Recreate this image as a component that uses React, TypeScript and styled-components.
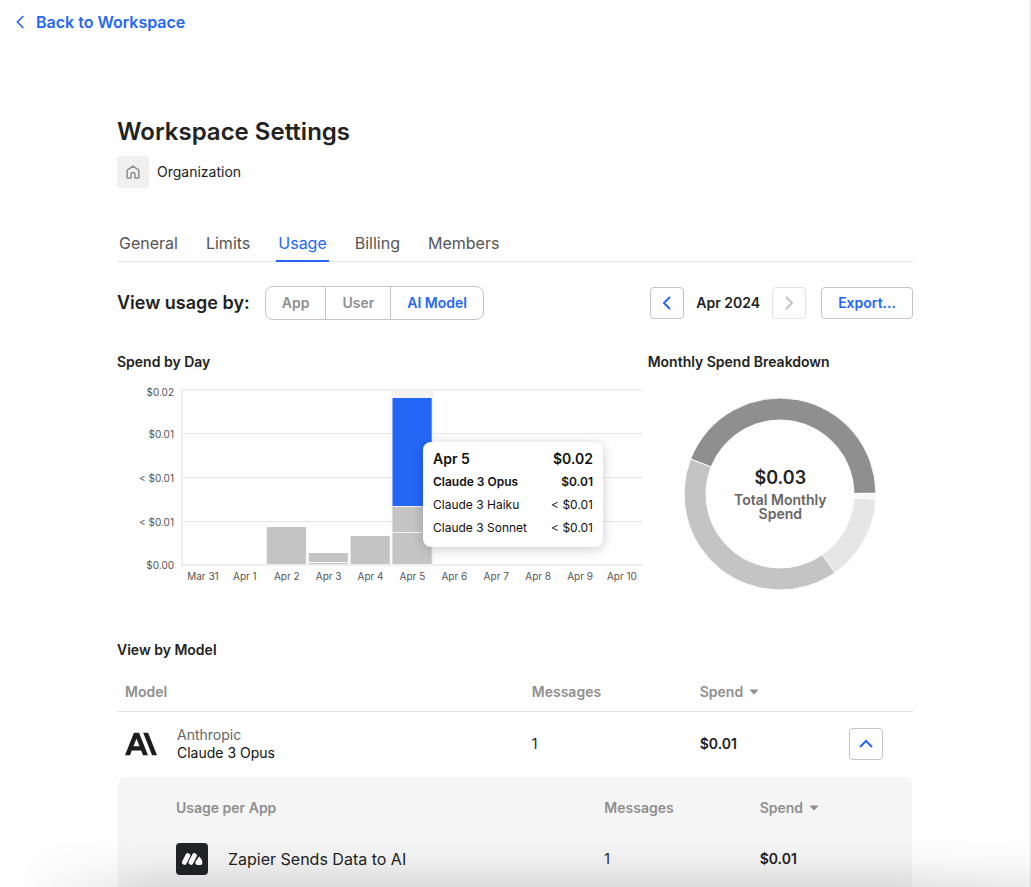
import React, { useState } from 'react';
import styled, { createGlobalStyle } from 'styled-components';

const GlobalStyle = createGlobalStyle`
  *, *::before, *::after { box-sizing: border-box; }
  body {
    margin: 0;
    background: #fefefe;
    color: #222;
    font-family: Inter, "Liberation Sans", sans-serif;
    font-size: 14px;
    line-height: 20px;
  }
  button { font: inherit; cursor: pointer; }
  h1, h2, p { margin: 0; }
`;

const Page = styled.div`
  min-height: 100vh;
  border-right: 1px solid #e2e2e2;
`;

const BottomShade = styled.div`
  position: fixed;
  inset: auto 0 0 0;
  height: 48px;
  pointer-events: none;
  background: linear-gradient(to bottom, rgba(0, 0, 0, 0), rgba(0, 0, 0, 0.03) 50%, rgba(0, 0, 0, 0.1));
  mask-image: linear-gradient(to right, transparent 2%, #000 16%, #000 86%, rgba(0, 0, 0, 0.7));
`;

const TopBar = styled.header`
  display: flex;
  align-items: center;
  height: 44px;
  padding: 0 16px;
`;

const BackLink = styled.a`
  display: flex;
  align-items: center;
  gap: 12px;
  color: #2467f6;
  font-size: 16px;
  font-weight: 600;
  text-decoration: none;
`;

const Content = styled.main`
  max-width: 796px;
  margin: 0 auto;
  padding-top: 72px;
`;

const Title = styled.h1`
  font-size: 24px;
  line-height: 32px;
  font-weight: 600;
`;

const Organization = styled.div`
  display: flex;
  align-items: center;
  gap: 8px;
  margin-top: 8px;
`;

const OrgIcon = styled.span`
  display: grid;
  place-items: center;
  width: 32px;
  height: 32px;
  border-radius: 4px;
  background: #f0f0f0;
`;

const Tabs = styled.nav`
  display: flex;
  gap: 24px;
  margin-top: 38px;
  border-bottom: 1px solid #e5e5e5;
`;

const Tab = styled.a<{ $active?: boolean }>`
  margin-bottom: -1px;
  padding: 7px 2px;
  border-bottom: 2px solid ${(p) => (p.$active ? '#2467f6' : 'transparent')};
  color: ${(p) => (p.$active ? '#2467f6' : '#555')};
  font-size: 16px;
  text-decoration: none;
`;

const Toolbar = styled.div`
  display: flex;
  align-items: center;
  justify-content: space-between;
  margin-top: 24px;
`;

const ToolGroup = styled.div<{ $gap: number }>`
  display: flex;
  align-items: center;
  gap: ${(p) => p.$gap}px;
`;

const ToolLabel = styled.h2`
  font-size: 18px;
  line-height: 24px;
  font-weight: 600;
`;

const Segments = styled.div`
  display: flex;
  height: 34px;
  border: 1px solid #c4c4c4;
  border-radius: 8px;
`;

const Segment = styled.button<{ $active: boolean }>`
  padding: 0 16px;
  border: 0;
  background: none;
  color: ${(p) => (p.$active ? '#2467f6' : '#8f8f8f')};
  font-weight: 600;
  & + & { border-left: 1px solid #c4c4c4; }
`;

const OutlineButton = styled.button<{ $wide?: boolean }>`
  display: grid;
  place-items: center;
  width: ${(p) => (p.$wide ? 'auto' : '34px')};
  height: 32px;
  padding: ${(p) => (p.$wide ? '0 16px' : '0')};
  border: 1px solid #c4c4c4;
  border-radius: 4px;
  background: #fefefe;
  color: #2467f6;
  font-weight: 600;
  &:disabled { border-color: #e2e2e2; color: #c4c4c4; cursor: default; }
`;

const Strong = styled.span`
  font-weight: 600;
`;

const Charts = styled.div`
  display: grid;
  grid-template-columns: 2fr 1fr;
  margin-top: 32px;
`;

const SectionTitle = styled.h2`
  font-size: 14px;
  line-height: 20px;
  font-weight: 600;
`;

const ChartBox = styled.div`
  position: relative;
  height: 208px;
  margin-top: 8px;
`;

const AxisText = styled.text`
  fill: #555;
  font-size: 10px;
`;

const Tooltip = styled.dl`
  position: absolute;
  left: 306px;
  top: 62px;
  display: grid;
  grid-template-columns: 1fr auto;
  width: 180px;
  margin: 0;
  padding: 5px 10px 8px;
  border-radius: 8px;
  background: #fff;
  color: #111;
  font-size: 12px;
  line-height: 23px;
  box-shadow: 0 2px 12px rgba(0, 0, 0, 0.2);
`;

const TipName = styled.dt<{ $strong?: boolean; $large?: boolean }>`
  font-weight: ${(p) => (p.$strong ? 600 : 400)};
  font-size: ${(p) => (p.$large ? 14 : 12)}px;
`;

const TipValue = styled(TipName).attrs({ as: 'dd' })`
  margin: 0;
  text-align: right;
`;

const DonutBox = styled.div`
  display: grid;
  place-items: center;
  margin-top: 26px;
  & > * { grid-area: 1 / 1; }
`;

const DonutLabel = styled.div`
  display: flex;
  flex-direction: column;
  width: 110px;
  padding-bottom: 4px;
  text-align: center;
  color: #666;
  font-weight: 600;
  line-height: 14px;
`;

const DonutTotal = styled.strong`
  color: #222;
  font-size: 18px;
  line-height: 30px;
  font-weight: 600;
`;

const ModelSection = styled.section`
  margin-top: 50px;
`;

const Table = styled.table`
  width: 100%;
  border-collapse: collapse;
  table-layout: fixed;
`;

const ModelTable = styled(Table)`
  margin-top: 12px;
`;

const Th = styled.th<{ $width: string; $ruled?: boolean }>`
  width: ${(p) => p.$width};
  height: ${(p) => (p.$ruled ? 39 : 30)}px;
  padding: ${(p) => (p.$ruled ? '2px 8px 0' : '0')};
  border-bottom: ${(p) => (p.$ruled ? '1px solid #e5e5e5' : '0')};
  color: #8f8f8f;
  font-weight: 600;
  text-align: left;
`;

const SortButton = styled.button`
  display: flex;
  align-items: center;
  gap: 6px;
  padding: 0;
  border: 0;
  background: none;
  color: inherit;
`;

const Td = styled.td<{ $strong?: boolean }>`
  height: 66px;
  padding: 0 8px 1px;
  font-weight: ${(p) => (p.$strong ? 600 : 400)};
`;

const ModelCell = styled.div`
  display: flex;
  align-items: center;
  gap: 20px;
  line-height: 18px;
  color: #111;
`;

const Vendor = styled.div`
  color: #666;
`;

const DetailTd = styled.td`
  padding: 0 1px;
`;

const DetailPanel = styled.div`
  padding: 16px 0 0 58px;
  border-radius: 8px 8px 0 0;
  background: #f5f5f5;
`;

const AppTd = styled.td<{ $strong?: boolean }>`
  height: 64px;
  padding: 8px 0 0;
  vertical-align: middle;
  font-weight: ${(p) => (p.$strong ? 600 : 400)};
`;

const AppCell = styled.div`
  display: flex;
  align-items: center;
  gap: 20px;
  font-size: 16px;
`;

const CHEVRONS = {
  left: 'M11 2L5 8L11 14',
  right: 'M5 2L11 8L5 14',
  up: 'M2 11L8 5L14 11',
};

const Chevron = ({ to }: { to: keyof typeof CHEVRONS }) => (
  <svg width="16" height="16" viewBox="0 0 16 16" fill="none" stroke="currentColor" strokeWidth="2" aria-hidden="true">
    <path d={CHEVRONS[to]} />
  </svg>
);

const Caret = () => (
  <svg width="10" height="6" viewBox="0 0 10 6" fill="currentColor" aria-hidden="true">
    <path d="M1.4.5h7.2q.9 0 .3.7L5.6 5q-.6.6-1.2 0L1.1 1.2Q.5.5 1.4.5z" />
  </svg>
);

const tickLabels = ['$0.02', '$0.01', '< $0.01', '< $0.01', '$0.00'];
const tickLines = [10, 54, 98, 142, 185];
const days = ['Mar 31', 'Apr 1', 'Apr 2', 'Apr 3', 'Apr 4', 'Apr 5', 'Apr 6', 'Apr 7', 'Apr 8', 'Apr 9', 'Apr 10'];
const bars = [
  { day: 2, top: 147, height: 37, fill: '#c4c4c4' },
  { day: 3, top: 173, height: 9, fill: '#c4c4c4' },
  { day: 3, top: 183, height: 1, fill: '#c4c4c4' },
  { day: 4, top: 156, height: 28, fill: '#c4c4c4' },
  { day: 5, top: 18, height: 108, fill: '#2467f6' },
  { day: 5, top: 127, height: 25, fill: '#c4c4c4' },
  { day: 5, top: 153, height: 31, fill: '#c4c4c4' },
];
const AXIS = 65;
const BAND = 41.9;

const SpendChart = () => (
  <svg width="526" height="208" viewBox="0 0 526 208" role="img" aria-label="Spend by day">
    {tickLines.map((y, i) => (
      <g key={y}>
        <line x1={AXIS} x2="526" y1={i % 4 ? y - 0.5 : y} y2={i % 4 ? y - 0.5 : y} stroke={i % 4 ? '#e5e5e5' : '#eee'} strokeWidth={i % 4 ? 1 : 2} />
        <AxisText x="57" y={(i ? y : 12) + 4} textAnchor="end">{tickLabels[i]}</AxisText>
      </g>
    ))}
    <line x1={AXIS} x2={AXIS} y1="9" y2="186" stroke="#eee" strokeWidth="2" />
    <rect x={AXIS + BAND * 5} y="11" width={BAND} height="174" fill="#f3f3f3" />
    {bars.map((b) => (
      <rect key={`${b.day}-${b.top}`} x={AXIS + BAND * b.day + 1} y={b.top} width="39.2" height={b.height} fill={b.fill} />
    ))}
    {days.map((d, i) => (
      <AxisText key={d} x={AXIS + BAND * (i + 0.5)} y="200" textAnchor="middle">{d}</AxisText>
    ))}
  </svg>
);

const tooltipRows = [
  { name: 'Apr 5', value: '$0.02', strong: true, large: true },
  { name: 'Claude 3 Opus', value: '$0.01', strong: true },
  { name: 'Claude 3 Haiku', value: '< $0.01' },
  { name: 'Claude 3 Sonnet', value: '< $0.01' },
];

const slices = [
  { from: -158.6, to: -0.4, color: '#8f8f8f' },
  { from: 55, to: 201.4, color: '#c4c4c4' },
  { from: 3, to: 55, color: '#e6e6e6' },
  { from: -0.4, to: 3, color: '#f5f5f5' },
];

const point = (deg: number, r: number) => {
  const a = (deg * Math.PI) / 180;
  return `${(96 + r * Math.cos(a)).toFixed(2)} ${(96 + r * Math.sin(a)).toFixed(2)}`;
};

const Donut = () => (
  <svg width="192" height="192" viewBox="0 0 192 192" aria-hidden="true">
    {slices.map((s) => (
      <path
        key={s.color}
        d={`M${point(s.from, 96)}A96 96 0 0 1 ${point(s.to, 96)}L${point(s.to, 74)}A74 74 0 0 0 ${point(s.from, 74)}Z`}
        fill={s.color}
        stroke="#fefefe"
        strokeWidth="1"
      />
    ))}
  </svg>
);

const AnthropicLogo = () => (
  <svg width="32" height="24" viewBox="0 3.5 24 17" fill="#1d1d1d" role="img" aria-label="Anthropic logo">
    <path d="M17.304 3.541h-3.672l6.696 16.918H24Zm-10.608 0L0 20.459h3.744l1.37-3.553h7.005l1.369 3.553h3.744L10.536 3.541Zm-.371 10.223 2.291-5.946 2.292 5.946Z" />
  </svg>
);

const AppLogo = () => (
  <svg width="32" height="32" viewBox="0 0 32 32" aria-hidden="true">
    <rect width="32" height="32" rx="4" fill="#222326" />
    <g stroke="#fff" strokeWidth="4.8" strokeLinecap="round">
      <path d="M8.4 19.4L11.8 12.6M15 19.4L18.4 12.6" />
    </g>
    <path d="M23.2 13.2q3.2 3.5 3.2 6.2a2.4 2.4 0 0 1-2.5 2.5h-2.4a2.3 2.3 0 0 1-1.9-3.5z" fill="#fff" />
  </svg>
);

const views = ['App', 'User', 'AI Model'];

export default function App() {
  const [view, setView] = useState('AI Model');
  return (
    <Page>
      <GlobalStyle />
      <TopBar>
        <BackLink href="#workspace">
          <svg width="8" height="14" viewBox="0 0 8 14" fill="none" stroke="currentColor" strokeWidth="1.6" aria-hidden="true">
            <path d="M7.4 1L1.4 7l6 6" />
          </svg>
          Back to Workspace
        </BackLink>
      </TopBar>
      <Content>
        <Title>Workspace Settings</Title>
        <Organization>
          <OrgIcon>
            <svg width="14" height="14" viewBox="0 0 14 14" fill="none" stroke="#8f8f8f" strokeWidth="1.5" strokeLinejoin="round" aria-hidden="true">
              <path d="M1.2 13V5.2L7 1.2l5.8 4V13H9V9.4q0-1.8-2-1.8t-2 1.8V13z" />
            </svg>
          </OrgIcon>
          Organization
        </Organization>
        <Tabs aria-label="Settings">
          {['General', 'Limits', 'Usage', 'Billing', 'Members'].map((t) => (
            <Tab key={t} href={`#${t.toLowerCase()}`} $active={t === 'Usage'}>{t}</Tab>
          ))}
        </Tabs>
        <Toolbar>
          <ToolGroup $gap={15}>
            <ToolLabel id="view-by">View usage by:</ToolLabel>
            <Segments role="group" aria-labelledby="view-by">
              {views.map((v) => (
                <Segment key={v} $active={v === view} aria-pressed={v === view} onClick={() => setView(v)}>{v}</Segment>
              ))}
            </Segments>
          </ToolGroup>
          <ToolGroup $gap={15}>
            <ToolGroup $gap={12}>
              <OutlineButton aria-label="Previous month"><Chevron to="left" /></OutlineButton>
              <Strong>Apr 2024</Strong>
              <OutlineButton aria-label="Next month" disabled><Chevron to="right" /></OutlineButton>
            </ToolGroup>
            <OutlineButton $wide>Export...</OutlineButton>
          </ToolGroup>
        </Toolbar>
        <Charts>
          <section>
            <SectionTitle>Spend by Day</SectionTitle>
            <ChartBox>
              <SpendChart />
              <Tooltip>
                {tooltipRows.map((r) => (
                  <React.Fragment key={r.name}>
                    <TipName $strong={r.strong} $large={r.large}>{r.name}</TipName>
                    <TipValue $strong={r.strong} $large={r.large}>{r.value}</TipValue>
                  </React.Fragment>
                ))}
              </Tooltip>
            </ChartBox>
          </section>
          <section>
            <SectionTitle>Monthly Spend Breakdown</SectionTitle>
            <DonutBox>
              <Donut />
              <DonutLabel>
                <DonutTotal>$0.03</DonutTotal>
                Total Monthly Spend
              </DonutLabel>
            </DonutBox>
          </section>
        </Charts>
        <ModelSection>
          <SectionTitle>View by Model</SectionTitle>
          <ModelTable>
            <thead>
              <tr>
                <Th $width="51.1%" $ruled>Model</Th>
                <Th $width="21.1%" $ruled>Messages</Th>
                <Th $width="18.7%" $ruled><SortButton>Spend <Caret /></SortButton></Th>
                <Th $width="9.1%" $ruled aria-label="Actions" />
              </tr>
            </thead>
            <tbody>
              <tr>
                <Td>
                  <ModelCell>
                    <AnthropicLogo />
                    <div>
                      <Vendor>Anthropic</Vendor>
                      <div>Claude 3 Opus</div>
                    </div>
                  </ModelCell>
                </Td>
                <Td>1</Td>
                <Td $strong>$0.01</Td>
                <Td><OutlineButton aria-label="Collapse" aria-expanded="true"><Chevron to="up" /></OutlineButton></Td>
              </tr>
              <tr>
                <DetailTd colSpan={4}>
                  <DetailPanel>
                    <Table>
                      <thead>
                        <tr>
                          <Th $width="58.2%">Usage per App</Th>
                          <Th $width="21.1%">Messages</Th>
                          <Th $width="20.7%"><SortButton>Spend <Caret /></SortButton></Th>
                        </tr>
                      </thead>
                      <tbody>
                        <tr>
                          <AppTd><AppCell><AppLogo />Zapier Sends Data to AI</AppCell></AppTd>
                          <AppTd>1</AppTd>
                          <AppTd $strong>$0.01</AppTd>
                        </tr>
                      </tbody>
                    </Table>
                  </DetailPanel>
                </DetailTd>
              </tr>
            </tbody>
          </ModelTable>
        </ModelSection>
      </Content>
      <BottomShade />
    </Page>
  );
}
